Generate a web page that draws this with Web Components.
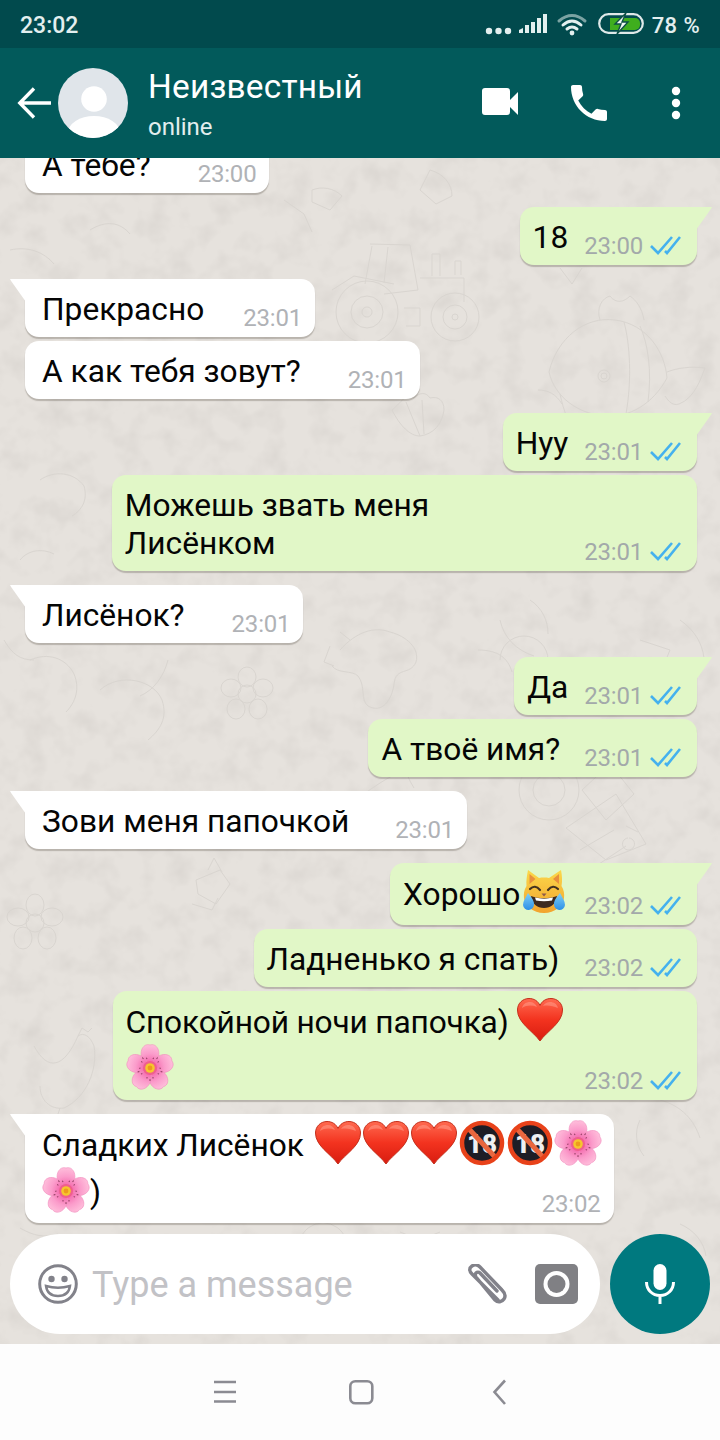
<!DOCTYPE html>
<html lang="ru">
<head>
<meta charset="utf-8">
<title>Чат</title>
<style>
  html, body { margin: 0; padding: 0; }
  body { width: 720px; height: 1440px; overflow: hidden; font-family: Roboto, "Noto Sans", sans-serif; display: flex; flex-direction: column; }
  chat-wall { flex: 1; min-height: 0; }
</style>
</head>
<body>
<status-bar></status-bar>
<chat-header name="Неизвестный" status="online"></chat-header>
<chat-wall>
  <chat-bubble side="in" time="23:00" gap="47">А тебе?</chat-bubble>
  <chat-bubble side="out" time="23:00" gap="16" tail>18</chat-bubble>
  <chat-bubble side="in" time="23:01" gap="39" tail>Прекрасно</chat-bubble>
  <chat-bubble side="in" time="23:01" gap="47">А как тебя зовут?</chat-bubble>
  <chat-bubble side="out" time="23:01" gap="16" tail>Нуу</chat-bubble>
  <chat-bubble side="out" time="23:01" gap="155">Можешь звать меня<br>Лисёнком</chat-bubble>
  <chat-bubble side="in" time="23:01" gap="47" tail>Лисёнок?</chat-bubble>
  <chat-bubble side="out" time="23:01" gap="16" tail>Да</chat-bubble>
  <chat-bubble side="out" time="23:01" gap="24">А твоё имя?</chat-bubble>
  <chat-bubble side="in" time="23:01" gap="46" tail>Зови меня папочкой</chat-bubble>
  <chat-bubble side="out" time="23:02" gap="16" tail>Хорошо<chat-emoji kind="cat"></chat-emoji></chat-bubble>
  <chat-bubble side="out" time="23:02" gap="25">Ладненько я спать)</chat-bubble>
  <chat-bubble side="out" time="23:02" gap="20" style="letter-spacing: -.17px">Спокойной ночи папочка) <chat-emoji kind="heart"></chat-emoji><br><chat-emoji kind="blossom" low></chat-emoji></chat-bubble>
  <chat-bubble side="in" time="23:02" gap="-60" tail>Сладких Лисёнок <chat-emoji kind="heart" style="margin-left: 2px"></chat-emoji><chat-emoji kind="heart"></chat-emoji><chat-emoji kind="heart"></chat-emoji><chat-emoji kind="no18"></chat-emoji><chat-emoji kind="no18"></chat-emoji><chat-emoji kind="blossom"></chat-emoji><br><chat-emoji kind="blossom" low></chat-emoji>)</chat-bubble>
  <chat-composer slot="composer" placeholder="Type a message"></chat-composer>
</chat-wall>
<nav-bar></nav-bar>

<script>
class StatusBar extends HTMLElement {
  constructor() {
    super();
    this.attachShadow({ mode: "open" });
  }

  connectedCallback() {
    this.shadowRoot.innerHTML = `
      <style>
        :host { display: flex; align-items: center; height: 48px; background: #014a4d; color: #e3efef;
          font: 500 22px Roboto, sans-serif; padding: 0 20px; box-sizing: border-box; flex: none; }
        .time { margin-right: auto; margin-top: 2px; font-size: 23px; }
        .level { margin-top: 2px; letter-spacing: .4px; }
        svg { display: block; }
      </style>
      <span class="time">23:02</span>
      <svg width="172" height="48" viewBox="0 0 172 48">
        <g fill="#e3efef">
          <circle cx="9" cy="31" r="3.2"/><circle cx="18.5" cy="31" r="3.2"/><circle cx="28" cy="31" r="3.2"/>
          <path d="M39 33v-3l4-2v5zM45 33v-8h4v8zM51 33v-11h4v11zM57 33v-15h4v15zM63 33V14h4v19z"/>
        </g>
        <g fill="none" stroke-linecap="round">
          <path d="M79 21q13-11 26 0" stroke="#7ba3a3" stroke-width="3"/>
          <path d="M83 25q9-8 18 0" stroke="#e3efef" stroke-width="3"/>
          <path d="M87 29q5-4 10 0" stroke="#e3efef" stroke-width="3"/>
        </g>
        <circle cx="92" cy="33" r="2.4" fill="#e3efef"/>
        <rect x="119.2" y="14.2" width="43.6" height="18.6" rx="9.3" fill="none" stroke="#dfe9e9" stroke-width="2.2"/>
        <path d="M130 18h25a5 5 0 0 1 5 5v2a5 5 0 0 1-5 5h-25z" fill="#3fae1e"/>
        <path d="M146 13l-11 11h6l-4 10 11-12h-6z" fill="#f2f8f2" stroke="#0d4f46" stroke-width="1.4"/>
      </svg>
      <span class="level">78 %</span>`;
  }
}

class ChatHeader extends HTMLElement {
  constructor() {
    super();
    this.attachShadow({ mode: "open" });
  }

  connectedCallback() {
    this.shadowRoot.innerHTML = `
      <style>
        :host { display: flex; align-items: center; height: 110px; background: #025a5b; color: #fff; flex: none;
          font-family: Roboto, sans-serif; box-sizing: border-box; padding-left: 17px; padding-right: 8px; }
        svg { display: block; flex: none; }
        .avatar { margin-left: 7px; }
        .who { margin-left: 20px; display: flex; flex-direction: column; }
        .name { font-size: 33.4px; line-height: 40px; letter-spacing: .2px; margin-top: 3px; }
        .status { font-size: 24px; line-height: 30px; margin-top: 5px; color: #e2eeee; }
        .actions { margin-left: auto; }
      </style>
      <svg width="34" height="34" viewBox="0 0 34 34" fill="none" stroke="#fff" stroke-width="3.4">
        <path d="M34 17H3M17 2.500L2.800 17l14.200 14.500"/>
      </svg>
      <svg class="avatar" width="70" height="70" viewBox="0 0 70 70">
        <circle cx="35" cy="35" r="35" fill="#e0e5ea"/>
        <clipPath id="round"><circle cx="35" cy="35" r="35"/></clipPath>
        <circle cx="36" cy="31" r="12.800" fill="#fff"/>
        <ellipse cx="36" cy="65" rx="26" ry="17" fill="#fff" clip-path="url(#round)"/>
      </svg>
      <div class="who">
        <span class="name">${this.getAttribute("name")}</span>
        <span class="status">${this.getAttribute("status")}</span>
      </div>
      <svg class="actions" width="240" height="110" viewBox="0 0 240 110" fill="#fff">
        <path d="M10 43a3 3 0 0 1 3-3h22a3 3 0 0 1 3 3v21a3 3 0 0 1-3 3H13a3 3 0 0 1-3-3zM38 52l8-8v23l-8-8z"/>
        <g transform="translate(93 31) scale(2)">
          <path d="M6.620 10.790c1.440 2.830 3.760 5.140 6.590 6.590l2.200-2.200c.27-.27.67-.36 1.020-.24 1.120.37 2.330.57 3.570.57.55 0 1 .45 1 1V20c0 .55-.45 1-1 1-9.390 0-17-7.610-17-17 0-.55.45-1 1-1h3.500c.55 0 1 .45 1 1 0 1.250.2 2.450.57 3.570.11.35.03.74-.25 1.020l-2.200 2.200z"/>
        </g>
        <circle cx="204" cy="43" r="4.200"/><circle cx="204" cy="55" r="4.200"/><circle cx="204" cy="67" r="4.200"/>
      </svg>`;
  }
}

class ChatWall extends HTMLElement {
  constructor() {
    super();
    this.attachShadow({ mode: "open" });
  }

  getDoodles() {
    return `
      <g fill="none" stroke="#d9d5d0" stroke-width="1">
        <!-- tractor -->
        <circle cx="367" cy="312" r="31"/><circle cx="367" cy="312" r="16"/><circle cx="367" cy="312" r="5"/>
        <circle cx="455" cy="317" r="24"/><circle cx="455" cy="317" r="12"/><circle cx="455" cy="317" r="3"/>
        <path d="M370 244l40 1 8 45-34 4M372 246l-7 38M388 247l-4 36M332 290l22-14 40 8M420 278h44v24M432 276v-22h8v22M455 275v-14h6v14M404 308h16v18h-14"/>
        <!-- fish -->
        <path d="M549 372c8-34 36-56 66-52 32 4 50 32 52 58-14 26-38 40-62 38-26-2-50-18-56-44z"/>
        <path d="M667 372c10-4 24-6 38-4-4 10-10 30-26 36-6 2-10-2-14-8M640 326c8 18 12 44 8 76M624 322c6 22 8 58 2 92M600 320c-4-12 2-22 10-24 6 8 14 6 20 0 6 4 12 12 14 24M562 404c-6-10-14-14-24-14M560 394c4 18 8 30 20 42 6 6 12 4 14-2"/>
        <circle cx="604" cy="376" r="6"/><circle cx="604" cy="376" r="3"/>
        <path d="M560 268l12 16 10-16"/>
        <!-- shell -->
        <path d="M392 410c10-8 12-16 22-12 6-6 12-6 16 0 8-2 14 2 14 12-2 14-10 24-24 26-10 0-20-10-28-26z"/>
        <path d="M406 402l14 34M422 400l2 34"/>
        <!-- flowers -->
        <g transform="translate(247 694)">
          <circle r="9"/><ellipse cy="-17" rx="9" ry="10"/><ellipse cx="16" cy="-6" rx="10" ry="9"/><ellipse cx="11" cy="15" rx="9" ry="10"/><ellipse cx="-11" cy="15" rx="9" ry="10"/><ellipse cx="-16" cy="-6" rx="10" ry="9"/>
        </g>
        <g transform="translate(35 923)">
          <circle r="9"/><ellipse cy="-18" rx="9" ry="11"/><ellipse cx="17" cy="-6" rx="11" ry="9"/><ellipse cx="12" cy="15" rx="9" ry="11"/><ellipse cx="-12" cy="15" rx="9" ry="11"/><ellipse cx="-17" cy="-6" rx="11" ry="9"/>
        </g>
        <path d="M312 190c10-4 22-2 30 6l-12 14-18-8zM284 200l20 14 8 18M430 170c14 4 22 14 22 26l-16 8-16-14zM196 880l24-10 10 14-14 20-18-10z"/>
        <path d="M192 904l20 6 6-12M208 870l6-12 8 14"/>
        <!-- hen -->
        <path d="M34 1046c14 26 30 22 44-10 6-4 12 0 16 10 4 24-8 52-30 62-14 2-24-8-24-22M78 1036l4-8 6 4 4-4M60 1108l-4 12"/>
        <!-- animal and plant -->
        <path d="M340 650c16-18 34-24 50-18 16 4 30 16 26 30-6 14-20 4-22 22-2 16-12 30-26 22-8-6-2-20-10-30-6-6-20-2-26-10M330 646l-6 16 10 4M350 640l-10-8M400 720c0 26 2 50 14 68M354 800c14-8 28-20 46-28"/>
        <path d="M30 660c18-8 36-2 44 14 6 14 2 28-8 38M100 690c20-18 54-10 62 10 6 18-2 30-14 40M168 660c-4 16-14 30-28 36"/>
        <path d="M4 640c8 14 16 20 30 20M530 600c12 8 18 20 18 34M500 620c4 18 16 30 34 36"/>
        <!-- gear and machine -->
        <circle cx="549" cy="790" r="30"/><circle cx="549" cy="790" r="16"/>
        <path d="M582 790l28-26 24 30-28 26zM566 828l50-34 30 50-40 16zM580 850l34-20M596 866l30-20M626 826l12 6M628 838a6 6 0 1 0 1 0"/>
        <path d="M500 660a24 24 0 1 1 48 0M478 650c20 0 30 8 34 22"/>
        <path d="M660 1100c22 6 34 20 40 38M640 1120c-6 12-4 26 4 36M680 1224c14 6 24 18 26 32M300 1240a24 24 0 0 1 46 0M20 1228c14 8 24 10 38 6M400 1232l20 8 20-8M488 1234c10 10 26 14 40 8"/>
        <path d="M90 230c16-10 30-8 40 4M10 250c18-4 34 2 44 14M680 620c14 10 22 22 24 38M640 640l30 10-10 24M40 480c14-10 34-8 44 6 4 14-2 24-12 30M20 560c8-10 22-12 34-6"/>
      </g>`;
  }

  connectedCallback() {
    this.shadowRoot.innerHTML = `
      <style>
        :host { display: grid; grid-template: minmax(0, 1fr) / minmax(0, 1fr); background: #e6e2dd; overflow: hidden; }
        .paper, .content { grid-area: 1 / 1; min-height: 0; }
        .paper { display: block; width: 720px; height: 100%; }
        .content { display: flex; flex-direction: column; }
        .messages { flex: 1; min-height: 0; overflow: hidden; display: flex; flex-direction: column;
          justify-content: flex-end; padding: 0 23px 11px 25px; }
      </style>
      <svg class="paper" viewBox="0 158 720 1186" preserveAspectRatio="none">
        <filter id="mottle" x="0" y="0" width="100%" height="100%">
          <feTurbulence type="fractalNoise" baseFrequency=".042" numOctaves="3" seed="11"/>
          <feColorMatrix values="0 0 0 0 .6  0 0 0 0 .57  0 0 0 0 .54  .8 0 0 0 -.35"/>
        </filter>
        <rect x="0" y="158" width="720" height="1186" filter="url(#mottle)"/>
        ${this.getDoodles()}
      </svg>
      <div class="content">
        <div class="messages"><slot></slot></div>
        <slot name="composer"></slot>
      </div>`;
  }
}

class ChatBubble extends HTMLElement {
  constructor() {
    super();
    this.attachShadow({ mode: "open" });
  }

  connectedCallback() {
    const out = this.getAttribute("side") === "out";
    this.style.setProperty("--gap", `${this.getAttribute("gap") || 17}px`);
    const ticks = out
      ? `<svg class="ticks" width="31" height="20" viewBox="0 0 31 20" fill="none" stroke="#45b1ee" stroke-width="2.600">
           <path d="M1 11l7 7L22 2M15 16l2 2L30 2"/>
         </svg>`
      : "";
    this.shadowRoot.innerHTML = `
      <style>
        :host { display: flex; align-items: flex-end; flex: none; position: relative; box-sizing: border-box;
          margin-top: 4px; border-radius: 14px; font: 400 31.7px/38px Roboto, sans-serif; color: #050505;
          box-shadow: 0 2px 1px rgba(70, 60, 50, .28); }
        :host([tail]) { margin-top: 14px; }
        :host([side="in"]) { align-self: flex-start; background: #fff; padding: 12px 13px 8px 17px; }
        :host([side="out"]) { align-self: flex-end; background: #e1f7c7; padding: 12px 16px 8px 13px; }
        :host([side="in"][tail]) { border-top-left-radius: 0; }
        :host([side="out"][tail]) { border-top-right-radius: 0; }
        :host([tail])::before { content: ""; position: absolute; top: 0; width: 16px; height: 23px; background: inherit; }
        :host([side="in"][tail])::before { left: -15px; clip-path: polygon(0 0, 100% 0, 100% 100%, 6% 8%); }
        :host([side="out"][tail])::before { right: -15px; clip-path: polygon(0 0, 100% 0, 94% 8%, 0 100%); }
        .text { white-space: nowrap; }
        .meta { display: flex; align-items: center; flex: none; margin-left: var(--gap); height: 24px; margin-bottom: -1px; }
        .time { font-size: 24px; line-height: 24px; letter-spacing: -.2px; color: ${out ? "#a3a9aa" : "#b0b2b6"}; }
        .ticks { display: block; margin-left: 7px; margin-top: -2px; }
      </style>
      <div class="text"><slot></slot></div>
      <div class="meta"><span class="time">${this.getAttribute("time")}</span>${ticks}</div>`;
  }
}

class ChatEmoji extends HTMLElement {
  constructor() {
    super();
    this.attachShadow({ mode: "open" });
  }

  getArt(kind) {
    if (kind === "heart") {
      return `
        <defs><linearGradient id="h" x1="0" y1="0" x2="0" y2="1"><stop offset="0" stop-color="#ff6a50"/><stop offset=".5" stop-color="#f3331f"/><stop offset="1" stop-color="#d81c10"/></linearGradient></defs>
        <path d="M24 45C17 35 1.500 27 1.500 14 1.500 7 7 2.500 13 2.500c5 0 9 2.500 11 7 2-4.500 6-7 11-7 6 0 11.500 4.500 11.500 11.500C46.500 27 31 35 24 45z" fill="url(#h)" stroke="#c4301c" stroke-width="1"/>
        <path d="M6 12c1-4 4-6 8-6 3 0 6 2 7 5-5-2-10-2-15 1zM42 12c-1-4-4-6-8-6-3 0-5 1-7 4 5-1 10 0 15 2z" fill="#ff9d8a" opacity=".55"/>`;
    }
    if (kind === "no18") {
      return `
        <circle cx="24" cy="24" r="19.500" fill="#1d1d26"/>
        <text x="24" y="33.500" text-anchor="middle" font-family="Roboto, sans-serif" font-weight="900" font-size="26" fill="#eef0f2">18</text>
        <path d="M11 10l26 28" stroke="#e9673f" stroke-width="5"/>
        <circle cx="24" cy="24" r="20" fill="none" stroke="#e8421a" stroke-width="4.500"/>`;
    }
    if (kind === "blossom") {
      const petal = [0, 72, 144, 216, 288].map((a) => `
        <path transform="rotate(${a} 24 25)" d="M24 24C16 20 13.500 12 16 6c2-4 5-5 8-4 3-1 6 0 8 4 2.500 6 0 14-8 18z" fill="url(#p)" stroke="#f28dbd" stroke-width=".6"/>`).join("");
      const specks = [0, 72, 144, 216, 288].map((a) => `
        <path transform="rotate(${a + 36} 24 25)" d="M24 12v1.800M21 14.500v1.500M27 14.500v1.500" stroke="#8c3a5c" stroke-width="1"/>`).join("");
      return `
        <defs><radialGradient id="p" gradientUnits="userSpaceOnUse" cx="24" cy="25" r="24"><stop offset=".15" stop-color="#f25ea6"/><stop offset=".6" stop-color="#fb9ccb"/><stop offset="1" stop-color="#ffc0dc"/></radialGradient></defs>
        ${petal}
        <circle cx="24" cy="25" r="7" fill="#ef5f8e"/>
        <circle cx="24" cy="25" r="4.800" fill="#f6c62e"/>
        <circle cx="24" cy="25" r="2.400" fill="#ee9a1e"/>
        ${specks}`;
    }
    return `
      <defs>
        <linearGradient id="c" x1="0" y1="0" x2="0" y2="1"><stop offset="0" stop-color="#fbd84a"/><stop offset="1" stop-color="#f2a32e"/></linearGradient>
        <linearGradient id="t" x1="0" y1="0" x2="0" y2="1"><stop offset="0" stop-color="#7fd0f8"/><stop offset="1" stop-color="#2d90e6"/></linearGradient>
      </defs>
      <path d="M8 2l11 8c3-.6 7-.6 10 0L41 2c1 5 1.500 11 .5 16 2.500 4 3 8 2.500 12-1 8-9 15-20 15S5 38 4 30c-.5-4 0-8 2.500-12C6 13 7 7 8 2z" fill="url(#c)"/>
      <path d="M9.500 6l6 5-6 5zM39 6l-6 5 6 5z" fill="#e88f3c"/>
      <path d="M10 21q5-5 10 1M28 22q5-6 10-1" fill="none" stroke="#43321f" stroke-width="2.200" stroke-linecap="round"/>
      <path d="M21.500 25.500h5l-2.500 3z" fill="#8f5a4a"/>
      <path d="M11 28c8 3 18 3 26 0-1 8-6 12-13 12s-12-4-13-12z" fill="#3c2a20"/>
      <path d="M15 29.500c6 1.500 12 1.500 18 0l-1 3c-5 1-11 1-16 0z" fill="#fff"/>
      <path d="M8 25c3 4 6 7 6 11a5.500 5.500 0 0 1-11 1c0-4 3-8 5-12zM40 25c-3 4-6 7-6 11a5.500 5.500 0 0 0 11 1c0-4-3-8-5-12z" fill="url(#t)"/>`;
  }

  connectedCallback() {
    const kind = this.getAttribute("kind");
    this.shadowRoot.innerHTML = `
      <style>
        :host { display: inline-block; width: 48px; height: 42px; vertical-align: -12px; }
        :host([low]) { margin-top: 5px; }
        svg { display: block; margin-top: -7px; overflow: visible; }
      </style>
      <svg width="48" height="48" viewBox="0 0 48 48" role="img" aria-label="${kind}">${this.getArt(kind)}</svg>`;
  }
}

class ChatComposer extends HTMLElement {
  constructor() {
    super();
    this.attachShadow({ mode: "open" });
  }

  connectedCallback() {
    this.shadowRoot.innerHTML = `
      <style>
        :host { display: flex; gap: 10px; padding: 0 10px 10px; flex: none; font-family: Roboto, sans-serif; }
        .field { flex: 1; height: 100px; border-radius: 50px; background: #fff; display: flex; align-items: center;
          padding-left: 28px; padding-right: 22px; box-sizing: border-box; }
        .hint { margin-left: 14px; font-size: 36px; line-height: 40px; color: #c2c2c6; margin-top: 2px; margin-right: auto; }
        .mic { width: 100px; height: 100px; border-radius: 50%; background: #00797f; display: flex; align-items: center; justify-content: center; flex: none; }
        svg { display: block; flex: none; }
        .camera { margin-left: 27px; }
      </style>
      <div class="field">
        <svg width="40" height="40" viewBox="0 0 40 40" fill="none" stroke="#82828a" stroke-width="3">
          <circle cx="20" cy="20" r="18.300"/>
          <circle cx="13.500" cy="15" r="3.200" fill="#82828a" stroke="none"/>
          <circle cx="26.500" cy="15" r="3.200" fill="#82828a" stroke="none"/>
          <path d="M8 22c7 2 17 2 24 0-1 7-6 10-12 10S9 29 8 22z" stroke-width="2.400"/>
        </svg>
        <span class="hint">${this.getAttribute("placeholder")}</span>
        <svg width="44" height="40" viewBox="0 0 44 40" fill="none" stroke="#82828a" stroke-width="3.400" stroke-linecap="round">
          <path d="M34 36L8 10c-3-3-3-6 0-8s6-1 8 1l22 23c3 3 4 6 2 9-2 3-6 4-9 1L12 13c-1-2-1-3 0-4 1-1 3-1 4 0l17 18"/>
        </svg>
        <svg class="camera" width="43" height="40" viewBox="0 0 43 40">
          <rect width="43" height="40" rx="5" fill="#808084"/>
          <circle cx="21.500" cy="20" r="13" fill="#fff"/>
          <circle cx="21.500" cy="20" r="9" fill="#808084"/>
        </svg>
      </div>
      <div class="mic">
        <svg width="30" height="40" viewBox="0 0 30 40" fill="none" stroke="#fff" stroke-width="3">
          <rect x="8.500" y="0" width="13" height="26" rx="6.500" fill="#fff" stroke="none"/>
          <path d="M1.500 18c0 8 6 13.500 13.500 13.500S28.500 26 28.500 18M15 31v9"/>
        </svg>
      </div>`;
  }
}

class NavBar extends HTMLElement {
  constructor() {
    super();
    this.attachShadow({ mode: "open" });
  }

  connectedCallback() {
    this.shadowRoot.innerHTML = `
      <style>
        :host { display: flex; align-items: center; justify-content: center; height: 96px; background: #fdfdfd; flex: none; padding-bottom: 0; }
        svg { display: block; }
      </style>
      <svg width="720" height="96" viewBox="0 0 720 96" fill="none" stroke="#8b8b92" stroke-width="2.600">
        <path d="M214 38h22M214 48h22M214 57.500h22"/>
        <rect x="350.300" y="37.300" width="22" height="22" rx="5"/>
        <path d="M505 36.500L494.500 48 505 60"/>
      </svg>`;
  }
}

customElements.define("status-bar", StatusBar);
customElements.define("chat-header", ChatHeader);
customElements.define("chat-wall", ChatWall);
customElements.define("chat-bubble", ChatBubble);
customElements.define("chat-emoji", ChatEmoji);
customElements.define("chat-composer", ChatComposer);
customElements.define("nav-bar", NavBar);
</script>
</body>
</html>
